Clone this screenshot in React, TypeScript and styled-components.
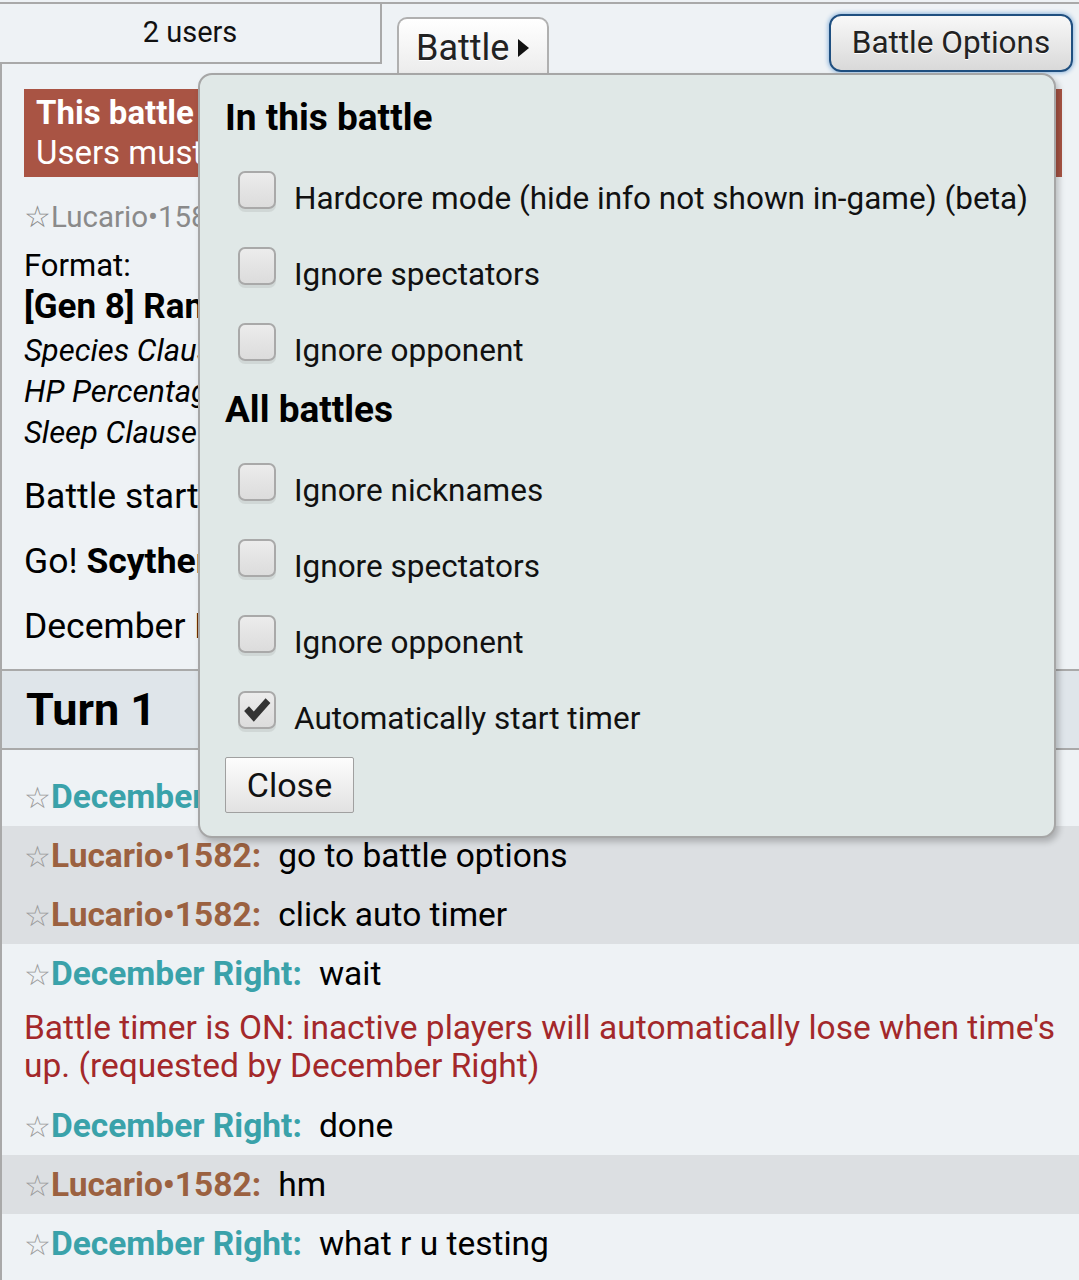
import React from 'react';
import styled, { createGlobalStyle } from 'styled-components';

type Option = { label: string; checked?: boolean };

const thisBattle: Option[] = [
  { label: 'Hardcore mode (hide info not shown in-game) (beta)' },
  { label: 'Ignore spectators' },
  { label: 'Ignore opponent' },
];

const allBattles: Option[] = [
  { label: 'Ignore nicknames' },
  { label: 'Ignore spectators' },
  { label: 'Ignore opponent' },
  { label: 'Automatically start timer', checked: true },
];

const TEAL = '#3aa2aa';
const BROWN = '#9b6140';

function Check({ checked }: { checked?: boolean }) {
  return (
    <Box>
      {checked && (
        <svg width="30" height="30" viewBox="0 0 28 28">
          <path d="M2 15 L6.5 10.5 L11 15.5 L22 3 L26.5 7.5 L11 25 Z" fill="#333" />
        </svg>
      )}
    </Box>
  );
}

function OptionRow({ label, checked }: Option) {
  return (
    <Row>
      <Check checked={checked} />
      <RowLabel>{label}</RowLabel>
    </Row>
  );
}

function Message({ name, color, hl, children }: { name: string; color: string; hl?: boolean; children: React.ReactNode }) {
  return (
    <ChatRow $hl={hl}>
      <Star>☆</Star>
      <Name $color={color}>{name}:</Name>
      {children}
    </ChatRow>
  );
}

function App() {
  return (
    <Page>
      <GlobalStyle />
      <Header>
        <UsersTab>2 users</UsersTab>
        <BattleTab>
          Battle
          <svg width="13" height="20" viewBox="0 0 13 20">
            <path d="M1 1 L12 10 L1 19 Z" fill="#111" />
          </svg>
        </BattleTab>
        <Spacer />
        <OptionsButton>Battle Options</OptionsButton>
      </Header>

      <Log>
        <Intro>
          <Banner>
            <strong>This battle is invite-only!</strong>
            <br />
            Users must be invited with /invite (or be staff) to join
          </Banner>
          <JoinLine>☆Lucario•1582 joined</JoinLine>
          <FormatBlock>
            <div>Format:</div>
            <FormatName>[Gen 8] Random Battle</FormatName>
            <Rule>Species Clause: Limit one of each Pokémon</Rule>
            <Rule>HP Percentage Mod: HP is shown in percentages</Rule>
            <Rule>Sleep Clause Mod: Limit one foe put to sleep</Rule>
          </FormatBlock>
          <BattleLine>Battle started between Lucario•1582 and December Right!</BattleLine>
          <BattleLine>
            Go! <strong>Scyther</strong>!
          </BattleLine>
          <BattleLine>December Right sent out Zygarde!</BattleLine>
        </Intro>

        <TurnBar>Turn 1</TurnBar>

        <Chat>
          <Message name="December Right" color={TEAL}>ok</Message>
          <Message name="Lucario•1582" color={BROWN} hl>go to battle options</Message>
          <Message name="Lucario•1582" color={BROWN} hl>click auto timer</Message>
          <Message name="December Right" color={TEAL}>wait</Message>
          <Notice>
            Battle timer is ON: inactive players will automatically lose when time's up. (requested by December Right)
          </Notice>
          <Message name="December Right" color={TEAL}>done</Message>
          <Message name="Lucario•1582" color={BROWN} hl>hm</Message>
          <Message name="December Right" color={TEAL}>what r u testing</Message>
        </Chat>
      </Log>

      <Popup>
        <PopupHeading>In this battle</PopupHeading>
        {thisBattle.map((o, i) => (
          <OptionRow key={'a' + i} {...o} />
        ))}
        <PopupHeading>All battles</PopupHeading>
        {allBattles.map((o, i) => (
          <OptionRow key={'b' + i} {...o} />
        ))}
        <CloseButton>Close</CloseButton>
      </Popup>
    </Page>
  );
}

export default App;

const GlobalStyle = createGlobalStyle`
  html, body {
    margin: 0;
    padding: 0;
    background: #eef2f5;
  }
  body {
    font-family: Roboto, "Liberation Sans", sans-serif;
    color: #000;
  }
`;

const Page = styled.div`
  position: relative;
  width: 1079px;
  min-height: 1280px;
  padding-top: 2px;
  box-sizing: border-box;
  overflow: hidden;
`;

const Header = styled.div`
  display: flex;
  align-items: flex-start;
  height: 60px;
  border-top: 2px solid #a9a9a9;
`;

const UsersTab = styled.div`
  width: 382px;
  height: 60px;
  box-sizing: border-box;
  border-right: 2px solid #a9a9a9;
  border-bottom: 2px solid #a9a9a9;
  font-size: 29px;
  line-height: 56px;
  text-align: center;
  color: #111;
`;

const BattleTab = styled.div`
  display: flex;
  align-items: center;
  gap: 8px;
  margin: 13px 0 0 15px;
  width: 152px;
  height: 62px;
  box-sizing: border-box;
  padding: 0 0 2px 17px;
  border: 2px solid #b0b0b0;
  border-bottom: none;
  border-radius: 10px 10px 0 0;
  background: linear-gradient(#ffffff, #eaeaea);
  font-size: 36px;
  color: #222;
  text-shadow: 0 1px 0 #fff;
`;

const Spacer = styled.div`
  flex: 1;
`;

const OptionsButton = styled.div`
  margin: 10px 6px 0 0;
  width: 244px;
  height: 58px;
  box-sizing: border-box;
  border: 2px solid #1f4f80;
  border-radius: 12px;
  background: linear-gradient(#f8f8f8, #d9d9d9);
  box-shadow: 0 0 4px 1px #8fb6dd;
  font-size: 31.5px;
  line-height: 54px;
  text-align: center;
  color: #222;
  text-shadow: 0 1px 0 #fff;
`;

const Log = styled.div`
  border-left: 2px solid #a9a9a9;
  padding-bottom: 8px;
`;

const Intro = styled.div`
  padding: 25px 17px 0 22px;
`;

const Banner = styled.div`
  height: 88px;
  box-sizing: border-box;
  padding: 4px 12px;
  background: #a95444;
  color: #fff;
  font-size: 33px;
  line-height: 40px;
  white-space: nowrap;
  overflow: hidden;
`;

const JoinLine = styled.div`
  margin-top: 20px;
  font-size: 29.5px;
  line-height: 40px;
  color: #8a8a8a;
`;

const FormatBlock = styled.div`
  margin-top: 9px;
  font-size: 31px;
  line-height: 40px;
`;

const FormatName = styled.div`
  font-size: 35px;
  font-weight: bold;
  line-height: 42px;
  margin-bottom: 2px;
`;

const Rule = styled.div`
  font-style: italic;
  line-height: 41px;
  white-space: nowrap;
`;

const BattleLine = styled.div`
  margin-top: 21px;
  font-size: 35.5px;
  line-height: 44px;
  white-space: nowrap;
`;

const TurnBar = styled.div`
  margin-top: 21px;
  height: 77px;
  border-top: 2px solid #a9a9a9;
  border-bottom: 2px solid #a9a9a9;
  background: #dfe5ea;
  padding-left: 24px;
  font-size: 45px;
  font-weight: bold;
  line-height: 77px;
`;

const Chat = styled.div`
  margin-top: 17px;
`;

const ChatRow = styled.div<{ $hl?: boolean }>`
  height: 59px;
  box-sizing: border-box;
  padding: 9px 22px;
  font-size: 33.5px;
  line-height: 41px;
  white-space: nowrap;
  overflow: hidden;
  background: ${({ $hl }) => ($hl ? '#dcdfe2' : 'transparent')};
`;

const Star = styled.span`
  font-family: "DejaVu Sans", sans-serif;
  font-size: 30px;
  line-height: 1;
  color: #9a9a9a;
`;

const Name = styled.strong<{ $color: string }>`
  color: ${({ $color }) => $color};
  margin-right: 17px;
`;

const Notice = styled.div`
  padding: 6px 17px 11px 22px;
  font-size: 33.5px;
  line-height: 38px;
  color: #a3282a;
`;

const Popup = styled.div`
  position: absolute;
  top: 73px;
  left: 198px;
  width: 858px;
  box-sizing: border-box;
  padding: 21px 25px 23px;
  border: 2px solid #a6a6a6;
  border-radius: 14px;
  background: #e0e8e7;
  box-shadow: 3px 4px 6px rgba(0, 0, 0, 0.22);
`;

const PopupHeading = styled.h3`
  margin: 0 0 20px;
  font-size: 37px;
  line-height: 44px;
  font-weight: bold;
`;

const Row = styled.label`
  display: flex;
  align-items: flex-start;
  height: 76px;
  padding-left: 13px;
`;

const Box = styled.span`
  display: flex;
  align-items: center;
  justify-content: center;
  margin-top: 11px;
  width: 38px;
  height: 38px;
  box-sizing: border-box;
  border: 2px solid #a9a9a9;
  border-radius: 7px;
  background: linear-gradient(#ececec, #dcdcdc);
  box-shadow: 0 3px 0 rgba(0, 0, 0, 0.07);
`;

const RowLabel = styled.span`
  margin-left: 18px;
  padding-top: 19px;
  font-size: 31.5px;
  line-height: 40px;
  color: #111;
`;

const CloseButton = styled.div`
  margin-top: 1px;
  width: 129px;
  height: 56px;
  box-sizing: border-box;
  border: 1px solid #a0a0a0;
  border-radius: 2px;
  background: linear-gradient(#fdfdfd, #e2e2e2);
  font-size: 34px;
  line-height: 54px;
  text-align: center;
  color: #111;
`;
